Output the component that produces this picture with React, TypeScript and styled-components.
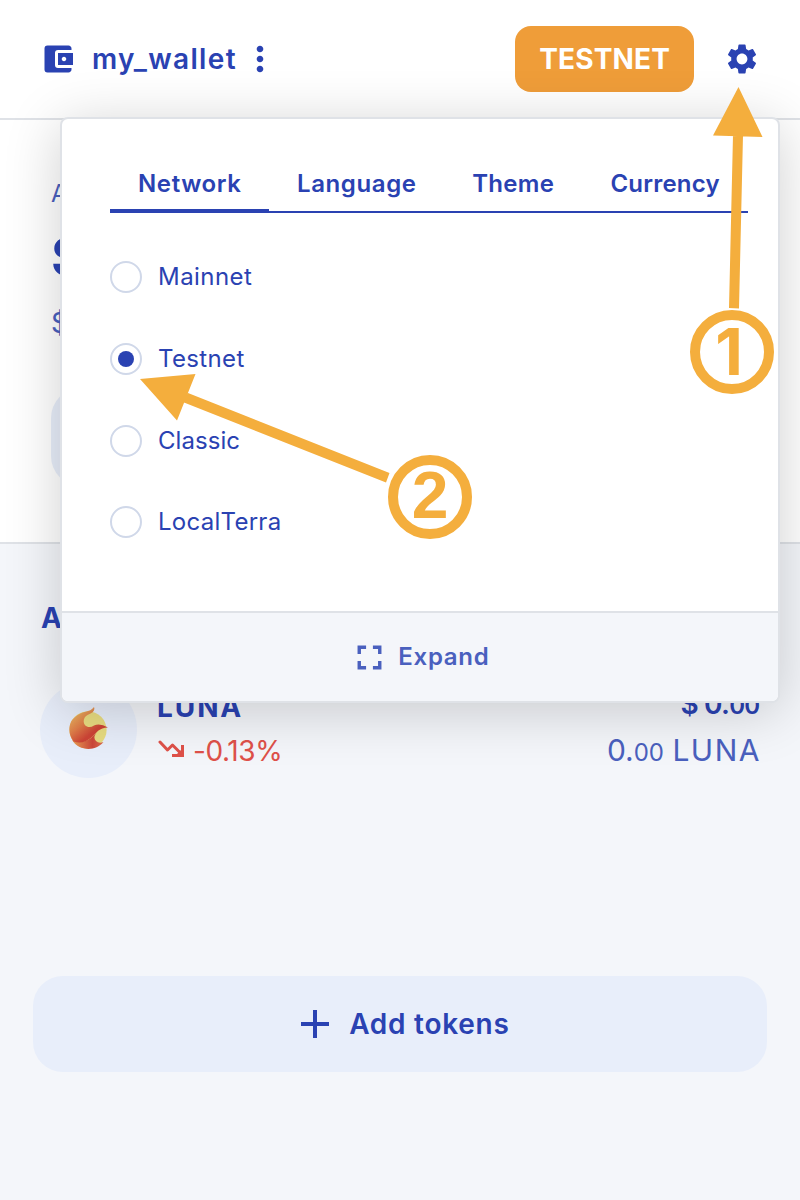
import React from 'react';
import styled, { createGlobalStyle } from 'styled-components';
import { MdAccountBalanceWallet, MdSettings, MdMoreVert, MdFullscreen, MdAdd } from 'react-icons/md';

const c = {
  blue: '#2a42b2',
  muted: '#4a60be',
  border: '#dfe2e7',
  soft: '#e8eefa',
  bg: '#f4f6fa',
  red: '#df5149',
  badge: '#ef9d39',
  mark: '#f4ae3d',
};

const GlobalStyle = createGlobalStyle`
  * { box-sizing: border-box; }
  body { margin: 0; background: ${c.bg}; font-family: Inter, "Liberation Sans", sans-serif; color: ${c.blue}; }
  svg { display: block; flex: none; }
`;

const Page = styled.div`
  position: relative;
  width: 800px;
  height: 1200px;
  overflow: hidden;
  display: flex;
  flex-direction: column;
`;

const Text = styled.span<{ size: number; weight?: number; track?: number; tone?: string }>`
  display: block;
  white-space: nowrap;
  font-size: ${p => p.size}px;
  line-height: 34px;
  font-weight: ${p => p.weight ?? 400};
  letter-spacing: ${p => p.track ?? 0}px;
  margin-right: ${p => -(p.track ?? 0)}px;
  color: ${p => p.tone ?? c.blue};
`;

const Header = styled.header`
  height: 120px;
  flex: none;
  display: flex;
  align-items: center;
  justify-content: space-between;
  padding: 0 40px 0 40px;
  background: #fff;
  border-bottom: 2px solid ${c.border};
`;

const WalletName = styled.div`
  display: flex;
  align-items: center;
  svg:last-child { margin-left: 4px; }
`;

const WalletLabel = styled.div`
  width: 144px;
  margin-left: 16px;
`;

const HeaderActions = styled.div`
  display: flex;
  align-items: center;
  gap: 30px;
`;

const NetworkBadge = styled.div`
  width: 179px;
  height: 66px;
  display: flex;
  align-items: center;
  justify-content: center;
  border-radius: 16px;
  background: ${c.badge};
`;

const Balance = styled.section`
  height: 424px;
  flex: none;
  padding: 57px 51px 0;
  background: #fff;
  border-bottom: 2px solid ${c.border};
`;

const Amount = styled.div`
  margin: 20px 0 23px;
  font-size: 54px;
  line-height: 52px;
  font-weight: 700;
`;

const SendButton = styled.div`
  width: 150px;
  height: 98px;
  margin-top: 48px;
  border-radius: 30px;
  background: ${c.soft};
`;

const Assets = styled.section`
  flex: 1;
  padding: 57px 33px 0;
`;

const AssetsTitle = styled.div`
  padding-left: 8px;
`;

const AssetRow = styled.div`
  display: flex;
  align-items: center;
  height: 97px;
  margin: 46px 7px 0;
`;

const TokenIcon = styled.div`
  width: 97px;
  height: 97px;
  flex: none;
  display: flex;
  align-items: center;
  justify-content: center;
  padding-bottom: 2px;
  border-radius: 50%;
  background: ${c.soft};
`;

const TokenInfo = styled.div<{ end?: boolean }>`
  display: flex;
  flex-direction: column;
  align-items: ${p => (p.end ? 'flex-end' : 'flex-start')};
  gap: 10px;
  margin-left: ${p => (p.end ? 'auto' : '20px')};
  padding-bottom: 2px;
`;

const Change = styled.div`
  display: flex;
  align-items: center;
  gap: 7px;
  padding-left: 1px;
  svg { margin-bottom: 3px; }
`;

const Decimals = styled.small`
  font-size: 24px;
`;

const Denom = styled.span`
  letter-spacing: 1.5px;
  margin-right: -1px;
`;

const AddButton = styled.div`
  height: 96px;
  margin-top: 198px;
  display: flex;
  align-items: center;
  justify-content: center;
  gap: 10px;
  border-radius: 30px;
  background: ${c.soft};
`;

const Popover = styled.div`
  position: absolute;
  left: 60px;
  top: 117px;
  width: 720px;
  height: 586px;
  display: flex;
  flex-direction: column;
  border: 2px solid ${c.border};
  border-radius: 8px;
  background: #fff;
  box-shadow: 0 8px 56px rgba(0, 0, 0, 0.19);
  overflow: hidden;
`;

const PopoverBody = styled.div`
  flex: 1;
  padding: 40px 30px 0 48px;
`;

const Tabs = styled.div`
  display: flex;
  height: 54px;
  border-bottom: 2px solid ${c.blue};
`;

const Tab = styled.div<{ wide: number; active?: boolean }>`
  width: ${p => p.wide}px;
  height: 54px;
  padding-top: 8px;
  display: flex;
  justify-content: center;
  border-bottom: ${p => (p.active ? `4px solid ${c.blue}` : '0')};
`;

const Options = styled.div`
  display: flex;
  flex-direction: column;
  gap: 49.8px;
  padding-top: 48px;
`;

const Option = styled.div`
  display: flex;
  align-items: center;
  height: 32px;
  gap: 16px;
`;

const Radio = styled.div<{ checked?: boolean }>`
  width: 32px;
  height: 32px;
  flex: none;
  display: flex;
  align-items: center;
  justify-content: center;
  border: 2px solid #d0d8e9;
  border-radius: 50%;
  &::after {
    content: '';
    width: 16px;
    height: 16px;
    border-radius: 50%;
    background: ${p => (p.checked ? c.blue : 'transparent')};
  }
`;

const Expand = styled.div`
  height: 90px;
  display: flex;
  align-items: center;
  justify-content: center;
  gap: 8px;
  padding-right: 2px;
  border-top: 2px solid ${c.border};
  background: ${c.bg};
`;

const Annotations = styled.svg`
  position: absolute;
  inset: 0;
  font-family: "Liberation Sans", Arial, sans-serif;
  font-size: 66px;
  font-weight: 700;
`;

const StepOne = styled.text`
  font-family: Inter, sans-serif;
  font-size: 64px;
`;

const tabs = [
  { name: 'Network', wide: 159, track: 0.6 },
  { name: 'Language', wide: 175, track: 0.6 },
  { name: 'Theme', wide: 138, track: 0.3 },
  { name: 'Currency', wide: 166, track: 0.2 },
];

const networks = [
  { name: 'Mainnet', track: 0.45 },
  { name: 'Testnet', track: 0.35 },
  { name: 'Classic', track: 0.05 },
  { name: 'LocalTerra', track: 0.27 },
];

const LunaLogo = () => (
  <svg width="40" height="44" viewBox="0 0 40 44">
    <defs>
      <linearGradient id="flame" x1="0.1" y1="0.1" x2="0.75" y2="0.85">
        <stop offset="0" stopColor="#ebbb62" />
        <stop offset="0.45" stopColor="#df7d49" />
        <stop offset="0.8" stopColor="#cd4436" />
      </linearGradient>
      <linearGradient id="base" x1="0" y1="0" x2="1" y2="0">
        <stop offset="0" stopColor="#e8a055" />
        <stop offset="0.65" stopColor="#cc4639" />
        <stop offset="1" stopColor="#dc704c" />
      </linearGradient>
    </defs>
    <circle cx="19" cy="23" r="18.6" fill="#e8dc81" />
    <path d="M3 33 Q12 38 22 31 L29 24 Q23 30 27 34 Q30 37 34.5 35 C26 45 10 44 3 33Z" fill="url(#base)" />
    <path d="M25 0 Q27 5 18.5 8 C13 11 14 18 18 19.5 Q21 21 25 18.5 Q31 16 39 20.5 C30 21 28 25 23 30 Q14 38 4.5 34.5 C-2 26 0 15 5 11 C13 3 21 6 25 0Z" fill="url(#flame)" />
  </svg>
);

const TrendDown = () => (
  <svg width="28" height="20" viewBox="0 0 28 20" fill="none" stroke={c.red} strokeWidth="3">
    <path d="M2 3 L9.5 11 L14.5 6 L23 14.5" strokeLinecap="round" strokeLinejoin="round" />
    <path d="M24.5 6 V16.5 H14" />
    <path d="M25 9 V17 H17Z" fill={c.red} stroke="none" />
  </svg>
);

export default function App() {
  return (
    <Page>
      <GlobalStyle />
      <Header>
        <WalletName>
          <MdAccountBalanceWallet size={36} />
          <WalletLabel><Text size={28} weight={600} track={1.35}>my_wallet</Text></WalletLabel>
          <MdMoreVert size={40} />
        </WalletName>
        <HeaderActions>
          <NetworkBadge><Text size={28} weight={700} track={0.15} tone="#fff">TESTNET</Text></NetworkBadge>
          <MdSettings size={36} />
        </HeaderActions>
      </Header>
      <Balance>
        <Text size={24} tone={c.muted}>A</Text>
        <Amount>$</Amount>
        <Text size={28} tone={c.muted}>$</Text>
        <SendButton />
      </Balance>
      <Assets>
        <AssetsTitle><Text size={28} weight={700}>A</Text></AssetsTitle>
        <AssetRow>
          <TokenIcon><LunaLogo /></TokenIcon>
          <TokenInfo>
            <Text size={28} weight={700} track={1.9}>LUNA</Text>
            <Change>
              <TrendDown />
              <Text size={28} track={-0.4} tone={c.red}>-0.13%</Text>
            </Change>
          </TokenInfo>
          <TokenInfo end>
            <Text size={28} weight={600} track={-0.8}>$ 0.<Decimals>00</Decimals></Text>
            <Text size={30} tone={c.muted}>0.<Decimals>00</Decimals> <Denom>LUNA</Denom></Text>
          </TokenInfo>
        </AssetRow>
        <AddButton>
          <MdAdd size={48} />
          <Text size={28} weight={600} track={0.75}>Add tokens</Text>
        </AddButton>
      </Assets>
      <Popover>
        <PopoverBody>
          <Tabs>
            {tabs.map((t, i) => (
              <Tab key={t.name} wide={t.wide} active={i === 0}>
                <Text size={24} weight={600} track={t.track}>{t.name}</Text>
              </Tab>
            ))}
          </Tabs>
          <Options>
            {networks.map(n => (
              <Option key={n.name}>
                <Radio checked={n.name === 'Testnet'} />
                <Text size={24} track={n.track}>{n.name}</Text>
              </Option>
            ))}
          </Options>
        </PopoverBody>
        <Expand>
          <MdFullscreen size={41} color={c.muted} />
          <Text size={24} weight={600} track={0.7} tone={c.muted}>Expand</Text>
        </Expand>
      </Popover>
      <Annotations width="800" height="1200" viewBox="0 0 800 1200" fill={c.mark}>
        <path d="M738.5 87 L762.5 137 L713 135.5Z M733 135 L743 135 L739 308.5 L729 308Z" />
        <path d="M140 379 L195.5 374 L177 420.5Z M188 393 L389.5 473 L386 482.5 L184 402.5Z" />
        <circle cx="732" cy="352" r="37" fill="none" stroke={c.mark} strokeWidth="10" />
        <circle cx="430" cy="497" r="37" fill="none" stroke={c.mark} strokeWidth="10" />
        <StepOne x="729" y="375" textAnchor="middle">1</StepOne>
        <text x="430" y="518" textAnchor="middle">2</text>
      </Annotations>
    </Page>
  );
}
